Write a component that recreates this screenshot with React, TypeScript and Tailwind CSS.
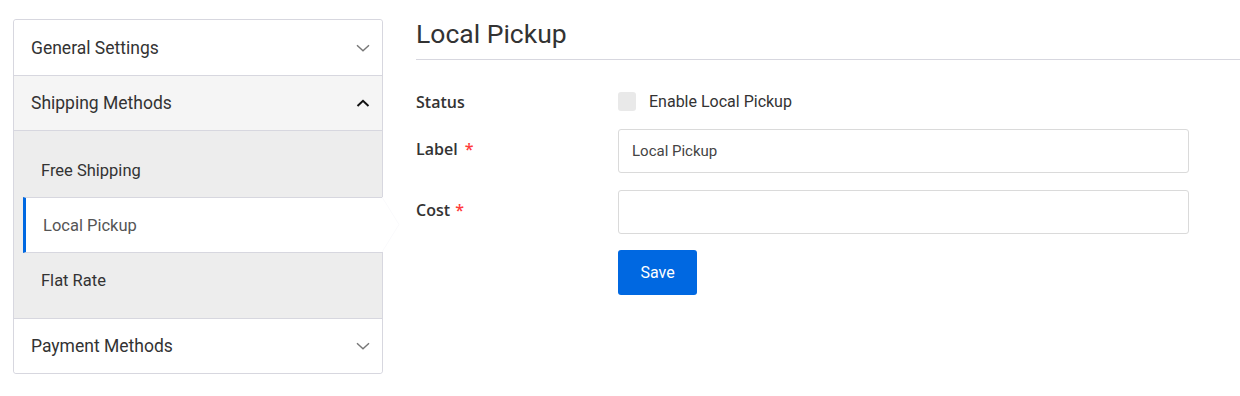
import React from "react";

const Chevron = ({ up = false, dark = false }: { up?: boolean; dark?: boolean }) => (
  <svg width="14" height="8" viewBox="0 0 14 8" fill="none" className={dark ? "text-[#111]" : "text-[#777]"}>
    {up ? (
      <path d="M1.5 7L7 1.8L12.5 7" stroke="currentColor" strokeWidth={dark ? 2 : 1.4} />
    ) : (
      <path d="M1 1.2L7 6.8L13 1.2" stroke="currentColor" strokeWidth="1.4" />
    )}
  </svg>
);

export default function App() {
  return (
    <div className="w-[1240px] h-[396px] bg-white font-['Roboto',sans-serif] flex pl-[13px] pt-[19px]">
      <div className="w-[370px] shrink-0">
        <div className="border border-[#d7d7df] rounded-[3px] relative">
          <div className="h-[56px] flex items-center justify-between pl-[17px] pr-[12px] border-b border-[#d7d7df] bg-white rounded-t-[3px]">
            <span className="text-[17.5px] text-[#333] pt-[2px]">General Settings</span>
            <Chevron />
          </div>
          <div className="h-[55px] flex items-center justify-between pl-[17px] pr-[12px] border-b border-[#d7d7df] bg-[#f5f5f5]">
            <span className="text-[17.5px] text-[#333] pt-[1px]">Shipping Methods</span>
            <Chevron up dark />
          </div>
          <div className="bg-[#ededed] pt-[11px] pb-[10px] pl-[9px]">
            <div className="h-[55px] flex items-center pl-[18px]">
              <span className="text-[16.5px] text-[#333] pt-[3px]">Free Shipping</span>
            </div>
            <div className="h-[56px] flex items-center pl-[17px] bg-white border-y border-[#d7d7df] border-l-[3px] border-l-[#0068e1] relative mr-[-1px]">
              <span className="text-[16.5px] text-[#555] pt-[2px]">Local Pickup</span>
              <svg className="absolute right-[-17px] top-[-1px]" width="18" height="56" viewBox="0 0 18 56" fill="none">
                <path d="M0 0L17 27.5L0 55Z" fill="white" />
                <path d="M0 0L17 27.5L0 55" stroke="#fafafc" strokeWidth="1" />
              </svg>
            </div>
            <div className="h-[55px] flex items-center pl-[18px]">
              <span className="text-[16.5px] text-[#333] pt-[2px]">Flat Rate</span>
            </div>
          </div>
          <div className="h-[55px] flex items-center justify-between pl-[17px] pr-[12px] border-t border-[#d7d7df] bg-white rounded-b-[3px]">
            <span className="text-[17.5px] text-[#333] pt-[1px]">Payment Methods</span>
            <Chevron />
          </div>
        </div>
      </div>
      <div className="flex-1 pl-[33px]">
        <div className="border-b border-[#d7d7df] h-[41px] flex items-start">
          <h1 className="text-[26.5px] leading-[30px] text-[#333]">Local Pickup</h1>
        </div>
        <div className="pt-[32px] flex flex-col">
          <div className="flex items-center h-[20px]">
            <div className="w-[202px] font-['Open_Sans',sans-serif] font-semibold text-[16px] text-[#333]">Status</div>
            <div className="flex items-center">
              <span className="w-[18px] h-[19px] rounded-[3px] bg-[#e9e9e9] inline-block mt-[-1px]" />
              <span className="ml-[13px] text-[16px] text-[#333]">Enable Local Pickup</span>
            </div>
          </div>
          <div className="flex mt-[17px]">
            <div className="w-[202px] pt-[8px] font-['Open_Sans',sans-serif] font-semibold text-[16px] text-[#333]">
              Label <span className="text-[#ff3b3b] ml-[3px]">*</span>
            </div>
            <div className="w-[571px] h-[44px] border border-[#dadada] rounded-[3px] flex items-center pl-[13px] text-[15px] text-[#444]">
              Local Pickup
            </div>
          </div>
          <div className="flex mt-[17px]">
            <div className="w-[202px] pt-[8px] font-['Open_Sans',sans-serif] font-semibold text-[16px] text-[#333]">
              Cost <span className="text-[#ff3b3b] ml-[1px]">*</span>
            </div>
            <div className="w-[571px] h-[44px] border border-[#dadada] rounded-[3px]" />
          </div>
          <div className="flex mt-[16px]">
            <div className="w-[202px]" />
            <button className="w-[79px] h-[45px] bg-[#0068e1] rounded-[3px] text-white text-[16px]">Save</button>
          </div>
        </div>
      </div>
    </div>
  );
}
